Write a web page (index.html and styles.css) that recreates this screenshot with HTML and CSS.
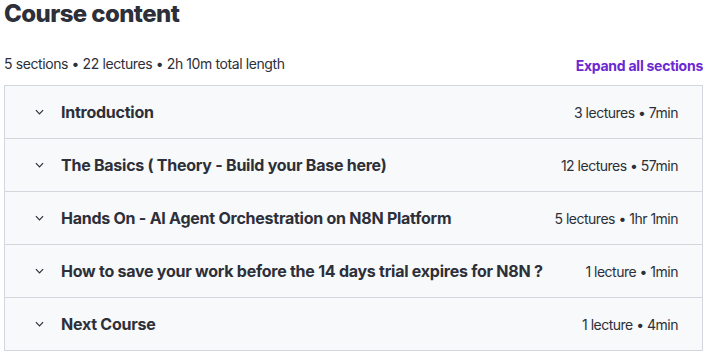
FILE: index.html
```html
<!DOCTYPE html>
<html lang="en">
<head>
    <meta charset="UTF-8">
    <meta name="viewport" content="width=device-width, initial-scale=1.0">
    <title>Course content</title>
    <link rel="stylesheet" href="styles.css">
</head>
<body>
    <div class="curriculum">
        <h2 class="title">Course content</h2>

        <div class="summary">
            <span class="stats">5 sections • 22 lectures • 2h 10m total length</span>
            <button class="expand-all">Expand all sections</button>
        </div>

        <div class="sections">
            <div class="section">
                <svg class="chevron" viewBox="0 0 10 6" width="9" height="6"><path d="M1 1l4 4 4-4" fill="none" stroke="currentColor" stroke-width="1.3"/></svg>
                <span class="section-title">Introduction</span>
                <span class="section-meta">3 lectures • 7min</span>
            </div>
            <div class="section">
                <svg class="chevron" viewBox="0 0 10 6" width="9" height="6"><path d="M1 1l4 4 4-4" fill="none" stroke="currentColor" stroke-width="1.3"/></svg>
                <span class="section-title">The Basics ( Theory - Build your Base here)</span>
                <span class="section-meta">12 lectures • 57min</span>
            </div>
            <div class="section">
                <svg class="chevron" viewBox="0 0 10 6" width="9" height="6"><path d="M1 1l4 4 4-4" fill="none" stroke="currentColor" stroke-width="1.3"/></svg>
                <span class="section-title">Hands On - AI Agent Orchestration on N8N Platform</span>
                <span class="section-meta">5 lectures • 1hr 1min</span>
            </div>
            <div class="section">
                <svg class="chevron" viewBox="0 0 10 6" width="9" height="6"><path d="M1 1l4 4 4-4" fill="none" stroke="currentColor" stroke-width="1.3"/></svg>
                <span class="section-title">How to save your work before the 14 days trial expires for N8N ?</span>
                <span class="section-meta">1 lecture • 1min</span>
            </div>
            <div class="section">
                <svg class="chevron" viewBox="0 0 10 6" width="9" height="6"><path d="M1 1l4 4 4-4" fill="none" stroke="currentColor" stroke-width="1.3"/></svg>
                <span class="section-title">Next Course</span>
                <span class="section-meta">1 lecture • 4min</span>
            </div>
        </div>
    </div>
</body>
</html>
```

FILE: styles.css
```css
* {
    box-sizing: border-box;
    margin: 0;
    padding: 0;
}

body {
    font-family: Inter, 'Liberation Sans', Arial, sans-serif;
    color: #2d2f39;
    background-color: white;
    padding: 0 7px 0 4px;
}

.title {
    font-size: 24px;
    font-weight: 800;
    line-height: 28px;
    letter-spacing: -0.6px;
}

.summary {
    display: flex;
    justify-content: space-between;
    align-items: flex-end;
    margin-top: 26px;
    margin-bottom: 11px;
}

.stats {
    font-size: 14px;
    line-height: 20px;
    letter-spacing: -0.4px;
}

.expand-all {
    background: none;
    border: none;
    color: #6d28d2;
    font-family: inherit;
    font-size: 14px;
    font-weight: 700;
    line-height: 20px;
    letter-spacing: -0.25px;
    margin-bottom: -2px;
    cursor: pointer;
}

.sections {
    border: 1px solid #d1d7dc;
    border-bottom: none;
}

.section {
    display: flex;
    align-items: center;
    height: 53px;
    padding: 0 24px 0 30px;
    background-color: #f7f9fa;
    border-bottom: 1px solid #d1d7dc;
}

.chevron {
    flex-shrink: 0;
    color: #2d2f39;
    margin-right: 17px;
}

.section-title {
    flex: 1;
    font-size: 16px;
    font-weight: 700;
    letter-spacing: -0.25px;
}

.section-meta {
    font-size: 14px;
    letter-spacing: -0.5px;
    margin-left: 16px;
    white-space: nowrap;
}
```
